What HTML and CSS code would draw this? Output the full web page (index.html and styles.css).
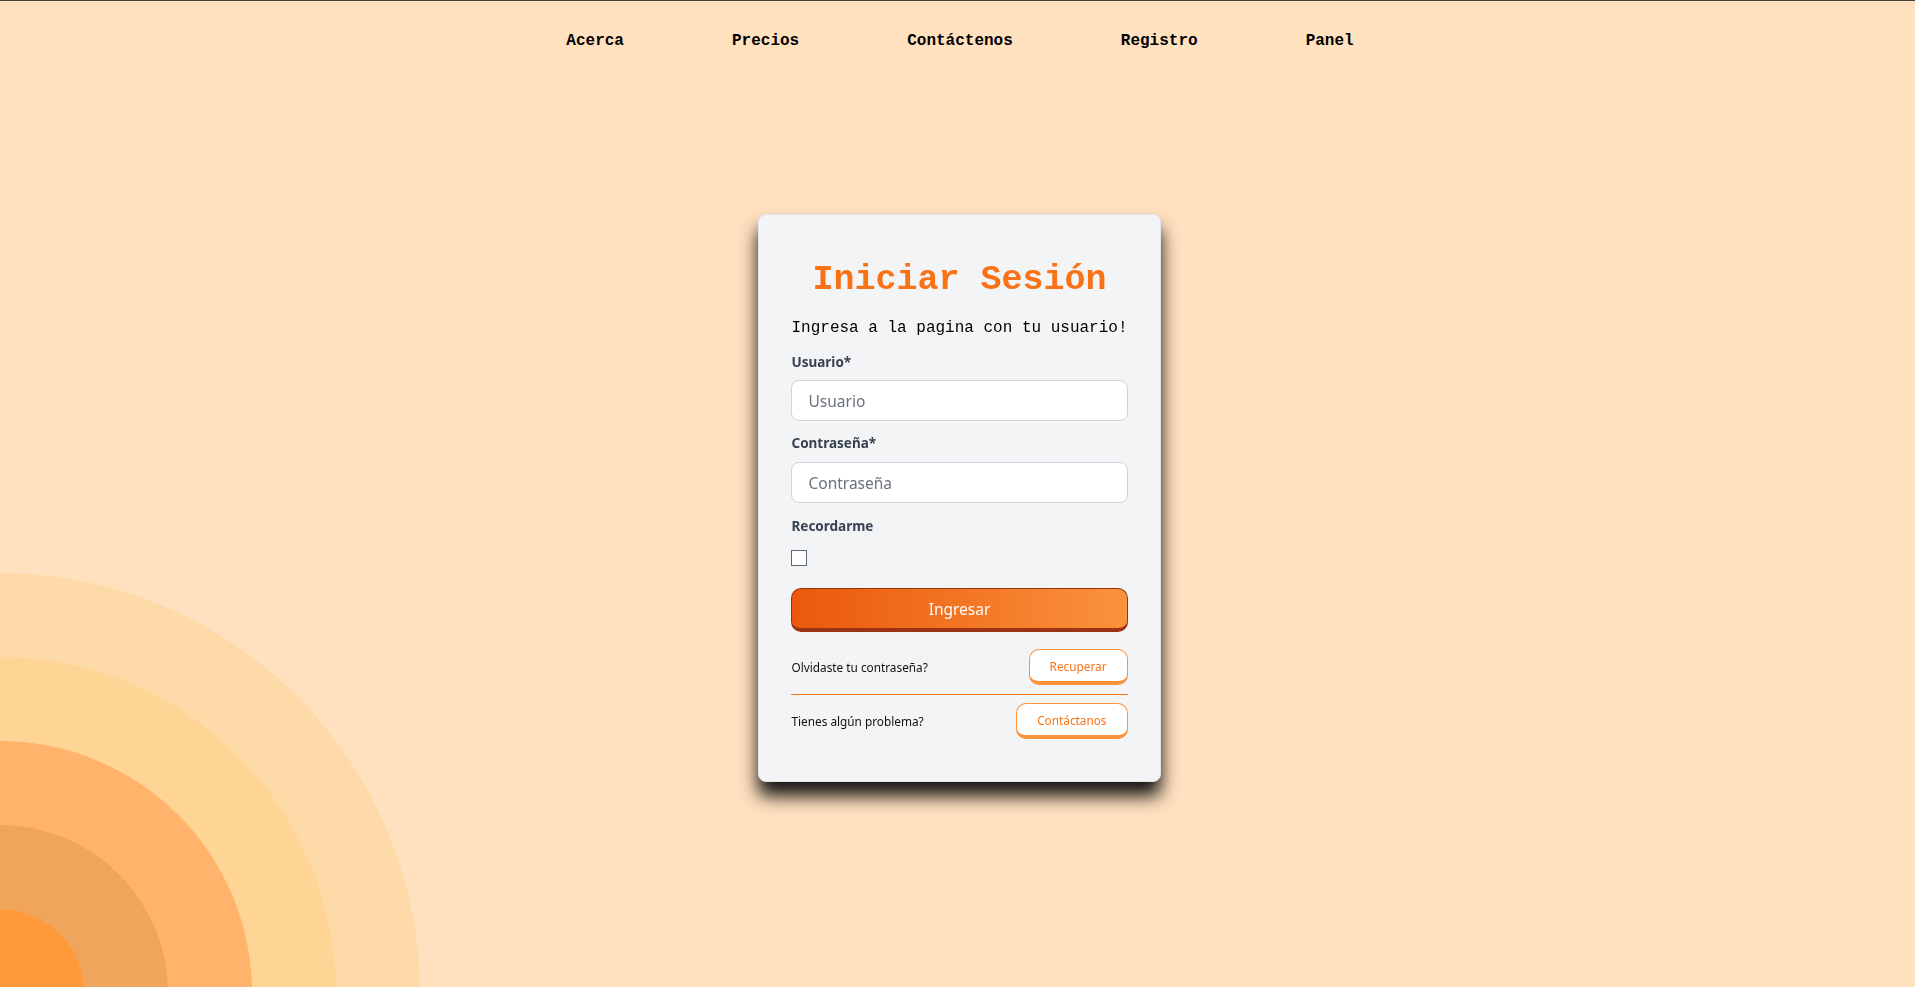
FILE: index.html
```html
<!DOCTYPE html>
<html lang="es">
<head>
  <meta charset="UTF-8">
  <meta name="viewport" content="width=device-width, initial-scale=1.0">
  <title>Iniciar Sesión</title>
  <link rel="stylesheet" href="styles.css">
</head>
<body>
  <header class="topbar">
    <nav class="nav">
      <a href="#" class="nav-link">Acerca</a>
      <a href="#" class="nav-link">Precios</a>
      <a href="#" class="nav-link">Contáctenos</a>
      <a href="#" class="nav-link">Registro</a>
      <a href="#" class="nav-link">Panel</a>
    </nav>
  </header>

  <div class="rings">
    <span class="ring ring-5"></span>
    <span class="ring ring-4"></span>
    <span class="ring ring-3"></span>
    <span class="ring ring-2"></span>
    <span class="ring ring-1"></span>
  </div>

  <main class="page">
    <form class="card">
      <h1 class="card-title">Iniciar Sesión</h1>
      <p class="card-sub">Ingresa a la pagina con tu usuario!</p>

      <label class="field-label" for="usuario">Usuario*</label>
      <input class="field" id="usuario" type="text" placeholder="Usuario">

      <label class="field-label label-pass" for="clave">Contraseña*</label>
      <input class="field field-pass" id="clave" type="password" placeholder="Contraseña">

      <label class="field-label label-remember" for="recordar">Recordarme</label>
      <input class="check" id="recordar" type="checkbox">

      <button class="btn-main" type="button">Ingresar</button>

      <div class="help-row">
        <span>Olvidaste tu contraseña?</span>
        <a href="#" class="btn-small">Recuperar</a>
      </div>
      <hr class="divider">
      <div class="help-row help-last">
        <span>Tienes algún problema?</span>
        <a href="#" class="btn-small">Contáctanos</a>
      </div>
    </form>
  </main>
</body>
</html>
```

FILE: styles.css
```css
*{
  box-sizing: border-box;
}
html, body{
  height: 100%;
  overflow: hidden;
}
body{
  margin: 0;
  background: #ffe1c0;
  font-family: "Noto Sans", "Open Sans", sans-serif;
}

.topbar{
  border-top: 1px solid #444;
}
.nav{
  height: 77px;
  padding: 2px 0 0 5px;
  display: flex;
  justify-content: center;
  align-items: center;
  gap: 108px;
}
.nav-link{
  font-family: "Liberation Mono", "Courier New", monospace;
  font-weight: 700;
  font-size: 16px;
  color: #000;
  text-decoration: none;
}

/* circulos decorativos */
.rings{
  position: fixed;
  left: 0;
  bottom: 0;
  width: 420px;
  height: 420px;
  overflow: hidden;
}
.ring{
  position: absolute;
  left: 0;
  top: 426px;
  border-radius: 50%;
  transform: translate(-50%, -50%);
}
.ring-5{ width: 840px; height: 840px; background: #ffdaa9; }
.ring-4{ width: 672px; height: 672px; background: #ffd596; }
.ring-3{ width: 504px; height: 504px; background: #ffb36b; }
.ring-2{ width: 336px; height: 336px; background: #f0a55c; }
.ring-1{ width: 168px; height: 168px; background: #ff9a3b; }

.page{
  position: relative;
  z-index: 1;
  padding-top: 136px;
  padding-left: 4px;
}
.card{
  width: fit-content;
  margin: 0 auto;
  display: flex;
  flex-direction: column;
  padding: 32px;
  background: #f3f4f6;
  border: 1px solid #e2e5ea;
  border-radius: 8px;
  box-shadow: 0 14px 18px rgba(0, 0, 0, 0.92);
}
.card-title{
  margin: 13px 0 0;
  text-align: center;
  font-family: "Liberation Mono", "Courier New", monospace;
  font-size: 35px;
  line-height: 40px;
  font-weight: 700;
  color: #f97316;
}
.card-sub{
  margin: 16px 0 0;
  font-family: "Liberation Mono", "Courier New", monospace;
  font-size: 16px;
  line-height: 24px;
  color: #000;
}
.field-label{
  margin-top: 12px;
  margin-bottom: 8px;
  font-size: 13.5px;
  line-height: 20px;
  font-weight: 700;
  color: #374151;
}
.label-pass{
  margin-bottom: 9px;
}
.label-remember{
  margin-top: 13px;
  margin-bottom: 14px;
}
.field{
  width: 100%;
  height: 41px;
  padding: 0 16px;
  border: 1px solid #d1d5db;
  border-radius: 8px;
  background: #fff;
  font-family: inherit;
  font-size: 15.5px;
  color: #111827;
  outline: none;
}
.field::placeholder{
  color: #6b7280;
}
.check{
  appearance: none;
  margin: 0;
  width: 16px;
  height: 16px;
  border: 1px solid #5f6774;
  background: #fff;
}
.btn-main{
  margin-top: 22px;
  height: 44px;
  width: 100%;
  border: 1px solid #9a3412;
  border-bottom-width: 4px;
  border-radius: 10px;
  background: linear-gradient(90deg, #ea580c, #fb923c);
  color: #fff;
  font-family: inherit;
  font-size: 15.5px;
  cursor: pointer;
}
.help-row{
  margin-top: 17px;
  display: flex;
  justify-content: space-between;
  align-items: center;
  font-size: 11.8px;
  color: #111;
}
.help-last{
  margin-top: 8px;
  margin-bottom: 10px;
}
.btn-small{
  height: 36px;
  display: flex;
  align-items: center;
  padding: 0 20px;
  border: 1px solid #fb923c;
  border-bottom-width: 4px;
  border-radius: 10px;
  background: #fff;
  color: #f97316;
  font-size: 11.8px;
  text-decoration: none;
}
.divider{
  margin: 9px 0 0;
  border: 0;
  border-top: 1px solid #f97316;
}
```
